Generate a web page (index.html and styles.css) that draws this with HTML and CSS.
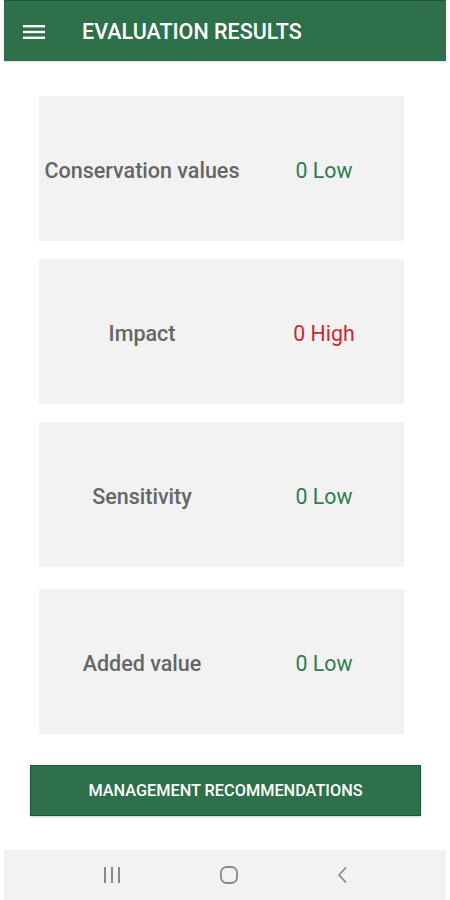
FILE: index.html
```html
<!DOCTYPE html>
<html>
<head>
<meta charset="utf-8">
<link rel="stylesheet" href="styles.css">
</head>
<body>
<div class="app">
  <header class="topbar">
    <svg class="menu" width="22" height="14" viewBox="0 0 22 14"><rect x="0" y="0" width="22" height="2.4" fill="#fff"/><rect x="0" y="5.8" width="22" height="2.4" fill="#fff"/><rect x="0" y="11.6" width="22" height="2.4" fill="#fff"/></svg>
    <h1 class="title">EVALUATION RESULTS</h1>
  </header>
  <main class="content">
    <div class="card">
      <div class="label">Conservation values</div>
      <div class="value low">0 Low</div>
    </div>
    <div class="card">
      <div class="label">Impact</div>
      <div class="value high">0 High</div>
    </div>
    <div class="card">
      <div class="label">Sensitivity</div>
      <div class="value low">0 Low</div>
    </div>
    <div class="card card-last">
      <div class="label">Added value</div>
      <div class="value low">0 Low</div>
    </div>
    <button class="action">MANAGEMENT RECOMMENDATIONS</button>
  </main>
  <nav class="navbar">
    <svg class="nav-icon" width="18" height="16" viewBox="0 0 18 16"><rect x="1" y="0" width="2" height="16" fill="#8a8a8a"/><rect x="8" y="0" width="2" height="16" fill="#8a8a8a"/><rect x="15" y="0" width="2" height="16" fill="#8a8a8a"/></svg>
    <svg class="nav-icon" width="18" height="18" viewBox="0 0 18 18"><rect x="1" y="1" width="16" height="16" rx="5.5" fill="none" stroke="#8a8a8a" stroke-width="1.8"/></svg>
    <svg class="nav-icon" width="10" height="16" viewBox="0 0 10 16"><path d="M8.5 1 L2 8 L8.5 15" fill="none" stroke="#8a8a8a" stroke-width="1.8" stroke-linecap="round" stroke-linejoin="round"/></svg>
  </nav>
</div>
</body>
</html>
```
FILE: styles.css
```css
* { box-sizing: border-box; }
html, body { margin: 0; padding: 0; background: #fff; }
body { font-family: Roboto, "Liberation Sans", sans-serif; }
.app {
  width: 450px;
  height: 900px;
  padding: 0 4px;
  display: flex;
  flex-direction: column;
}
.topbar {
  height: 61px;
  background: #2d7049;
  border-top: 1px solid #1f5535;
  display: flex;
  align-items: center;
  padding-left: 19px;
  padding-top: 1px;
  box-shadow: 0 1px 2px rgba(0,0,0,0.15);
}
.menu { display: block; }
.title {
  margin: 0 0 0 37px;
  color: #fff;
  font-size: 21.5px;
  font-weight: 500;
}
.content {
  flex: 1;
  display: flex;
  flex-direction: column;
  align-items: flex-start;
  padding-top: 35px;
  padding-left: 35px;
}
.card {
  width: 365px;
  height: 145px;
  padding-top: 4px;
  background: #f2f2f2;
  display: grid;
  grid-template-columns: 206px 1fr;
  align-items: center;
  margin-bottom: 18px;
}
.card-last { margin-top: 4px; margin-bottom: 31px; }
.label {
  text-align: center;
  color: #666;
  font-size: 21.5px;
  font-weight: 500;
}
.value {
  text-align: center;
  font-size: 21.3px;
  padding-right: 1px;
}
.low { color: #2e7d52; }
.high { color: #d0272f; }
.action {
  width: 391px;
  height: 51px;
  margin-left: -9px;
  background: #2d7049;
  border: 1px solid #1f5535;
  color: #fff;
  font-family: Roboto, "Liberation Sans", sans-serif;
  font-size: 16.3px;
  font-weight: 500;
  box-shadow: 0 1px 2px rgba(0,0,0,0.2);
}
.navbar {
  height: 50px;
  background: #f2f2f2;
  display: flex;
  align-items: center;
  justify-content: space-between;
  padding: 0 99px 0 99px;
}
.nav-icon { display: block; }
```
